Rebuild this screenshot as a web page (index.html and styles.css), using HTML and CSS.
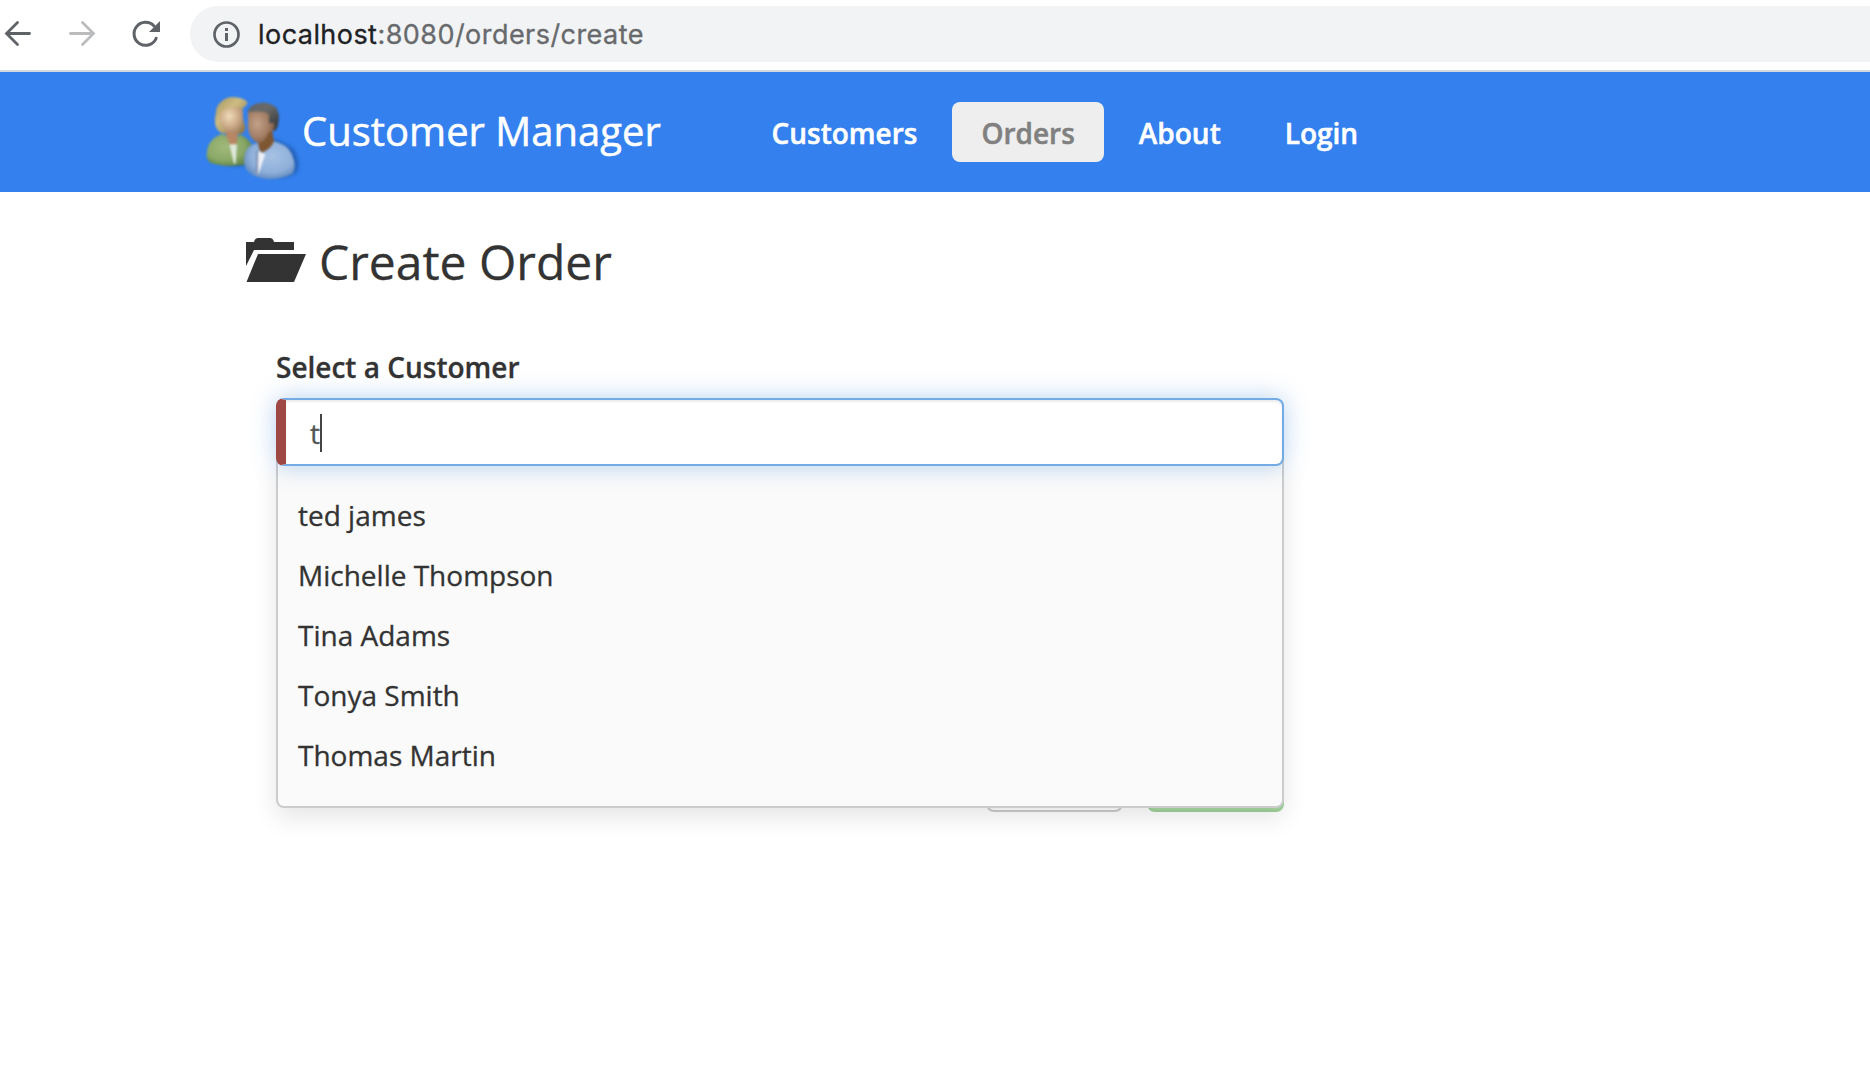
FILE: index.html
```html
<!DOCTYPE html>
<html lang="en">
<head>
<meta charset="utf-8">
<title>Customer Manager</title>
<link rel="stylesheet" href="styles.css">
</head>
<body>
<div class="toolbar">
  <svg class="controls" viewBox="0 0 190 70" width="190" height="70" fill="none" stroke-width="2.8" stroke-linecap="round" stroke-linejoin="miter">
    <path stroke="#5f6368" d="M29.5 33.5H7M17.5 22.5L6.5 33.5L17.5 44.5"/>
    <path stroke="#babcbe" d="M70.500 33.5H93M82.500 22.5L93.500 33.5L82.500 44.5"/>
    <path stroke="#5f6368" stroke-width="3" d="M156.200 38.200A11.500 11.500 0 1 1 154 26"/>
    <path fill="#5f6368" d="M160 21V32H149Z"/>
  </svg>
  <div class="address">
    <svg viewBox="0 0 28 28" width="28" height="28"><circle cx="14.500" cy="14.500" r="12" fill="none" stroke="#5f6368" stroke-width="2.700"/><path fill="#5f6368" d="M13 8h3v3h-3zM13 13h3v8h-3z"/></svg>
    <span class="url"><b>localhost</b>:8080/orders/create</span>
  </div>
</div>
<header class="header">
  <svg class="people" viewBox="0 0 390 330" width="130" height="110">
    <defs>
      <radialGradient id="face1" cx=".4" cy=".35" r=".7"><stop offset="0" stop-color="#efdcb9"/><stop offset=".55" stop-color="#cfae8c"/><stop offset="1" stop-color="#a68468"/></radialGradient>
      <radialGradient id="face2" cx=".35" cy=".4" r=".75"><stop offset="0" stop-color="#c4a189"/><stop offset=".6" stop-color="#a07c63"/><stop offset="1" stop-color="#744f38"/></radialGradient>
      <linearGradient id="blond" x2="1" y2="1"><stop offset="0" stop-color="#a59460"/><stop offset=".4" stop-color="#cdbc82"/><stop offset="1" stop-color="#866d3c"/></linearGradient>
      <linearGradient id="dark" x2="1" y2="1"><stop offset="0" stop-color="#626466"/><stop offset=".45" stop-color="#696969"/><stop offset="1" stop-color="#353535"/></linearGradient>
      <radialGradient id="green" cx=".4" cy=".4" r=".65"><stop offset="0" stop-color="#a1b97a"/><stop offset=".65" stop-color="#8aa868"/><stop offset="1" stop-color="#5f8345"/></radialGradient>
      <radialGradient id="blue" cx=".55" cy=".4" r=".65"><stop offset="0" stop-color="#a6c2e4"/><stop offset=".65" stop-color="#8fb0da"/><stop offset="1" stop-color="#5c84ba"/></radialGradient>
      <filter id="soft" color-interpolation-filters="sRGB"><feGaussianBlur stdDeviation="2.500"/></filter>
      <filter id="shade" color-interpolation-filters="sRGB"><feGaussianBlur stdDeviation="6"/></filter>
    </defs>
    <path filter="url(#shade)" fill="#12407f" opacity=".55" d="M60 230Q120 270 180 252Q255 312 318 278Q335 250 308 205L260 180Z"/>
    <g filter="url(#soft)">
      <path fill="url(#blond)" d="M80 85Q95 53 126 52Q160 52 173 68Q168 79 158 85Q157 118 166 140Q166 158 150 162L96 160Q73 148 75 119Z"/>
      <path fill="#b78764" d="M108 148H143V198H108Z"/>
      <path fill="url(#green)" d="M50 233Q47 179 96 162Q112 162 119 194L136 248L140 193Q142 172 148 163Q180 176 187 200V250Q110 268 58 247Z"/>
      <path fill="#dfe9da" d="M118 193H141L137 251H132Z"/>
      <path fill="url(#face1)" d="M94 91Q125 75 157 86Q164 131 147 151Q128 166 108 151Q90 136 90 107Z"/>
      <path fill="url(#blond)" d="M80 85Q96 53 126 52Q158 53 173 68Q165 80 136 81Q103 84 91 100Q83 127 99 158Q75 147 75 118Z"/>
      <path fill="#7e5631" d="M202 177L248 148Q247 181 258 190L230 223L207 215Z"/>
      <path fill="url(#blue)" d="M162 249Q160 207 188 192L205 190Q205 208 215 218Q243 208 252 184Q293 194 305 221Q322 261 308 281Q244 312 187 284Q164 271 162 249Z"/>
      <path fill="#edf0f8" d="M201 213Q212 216 226 223L204 286L197 284Z"/>
      <path fill="#64769a" d="M200 211L204 213L203 285L198 284Z"/>
      <path fill="url(#dark)" d="M175 91Q187 67 227 68Q262 73 266 104Q267 142 254 154L237 136Z"/>
      <path fill="url(#face2)" d="M174 97Q204 87 237 98V129Q255 120 253 140Q250 158 236 157Q228 186 207 190Q179 181 174 145Z"/>
      <path fill="url(#dark)" d="M174 91Q190 67 227 69Q263 74 266 106Q266 126 262 140L254 128L237 130V101Q211 91 174 97Z"/>
    </g>
  </svg>
  <span class="brand">Customer Manager</span>
  <nav class="nav"><a>Customers</a><a class="active">Orders</a><a>About</a><a>Login</a></nav>
</header>
<main class="main">
  <h1 class="title">
    <svg viewBox="0 0 60 44" width="60" height="44" fill="#333"><path d="M0 4H8Q9 0 12 0H24Q27 0 28 4H48V12H8L0 28ZM12 16H60L48 44H.500Z"/></svg>
    <span>Create Order</span>
  </h1>
  <form class="form">
    <label class="label">Select a Customer</label>
    <div class="combo">
      <div class="input"><span>t</span><i class="caret"></i></div>
      <ul class="menu"><li>ted james</li><li>Michelle Thompson</li><li>Tina Adams</li><li>Tonya Smith</li><li>Thomas Martin</li></ul>
    </div>
    <div class="actions"><button type="button" class="btn cancel"></button><button type="button" class="btn submit"></button></div>
  </form>
</main>
</body>
</html>
```
FILE: styles.css
```css
* { box-sizing: border-box; }
body { margin: 0; height: 1074px; overflow: hidden; background: #fff; color: #333; font: 28px/40px "Open Sans", sans-serif; -webkit-text-stroke: .3px currentColor; }
.toolbar { display: flex; align-items: flex-start; height: 72px; border-bottom: 2px solid #d5d8dc; }
.controls { flex: none; }
.address { flex: 1; display: flex; align-items: center; gap: 18px; height: 56px; margin-top: 6px; padding-left: 22px; background: #f1f3f4; border-radius: 28px 0 0 28px; }
.url { padding-top: 1px; color: #67696c; font: 27px/40px Inter, sans-serif; letter-spacing: .45px; white-space: nowrap; }
.url b { color: #202124; font-weight: 400; }
.header { display: flex; align-items: center; height: 120px; padding-left: 190px; background: #3380ee; color: #fff; -webkit-text-stroke-width: .5px; }
.people { flex: none; margin-top: 6px; }
.brand { width: 440px; margin: 0 0 2px -18px; font-size: 40px; line-height: 56px; white-space: nowrap; }
.nav { display: flex; gap: 5px; font-weight: 600; }
.nav a { padding: 11px 29.5px 9px; line-height: 40px; border-radius: 8px; }
.nav .active { background: #eee; color: #808080; }
.main { padding: 37px 0 0 246px; }
.title { display: flex; align-items: center; gap: 13px; margin: 0; font-size: 48px; line-height: 66px; font-weight: 400; }
.title svg { margin-top: -5px; }
.form { width: 1038px; padding: 52px 0 0 30px; }
.label { display: block; height: 51px; font-weight: 600; }
.combo { position: relative; z-index: 1; }
.input { position: relative; z-index: 2; display: flex; align-items: center; height: 68px; padding: 2px 0 0 24px; border: 2px solid #73abe4; border-left: 10px solid #9e4845; border-radius: 8px; background: #fff; color: #555; box-shadow: inset 0 2px 2px rgba(0,0,0,.08), 0 0 24px rgba(82,145,220,.42); }
.caret { width: 2px; height: 38px; background: #444; }
.menu { position: absolute; top: 60px; left: 0; right: 0; z-index: 1; margin: 0; padding: 27px 20px 21px; list-style: none; background: #fafafa; border: 2px solid #ccc; border-top: 0; border-radius: 0 0 8px 8px; box-shadow: 0 10px 24px rgba(0,0,0,.1); }
.menu li { height: 60px; line-height: 60px; }
.actions { display: flex; justify-content: flex-end; gap: 24px; margin-top: 278px; }
.btn { width: 137px; height: 68px; border: 2px solid #ccc; border-radius: 8px; background: #fff; }
.submit { border-color: #9fd19b; background: #a8d8a2; }
```
